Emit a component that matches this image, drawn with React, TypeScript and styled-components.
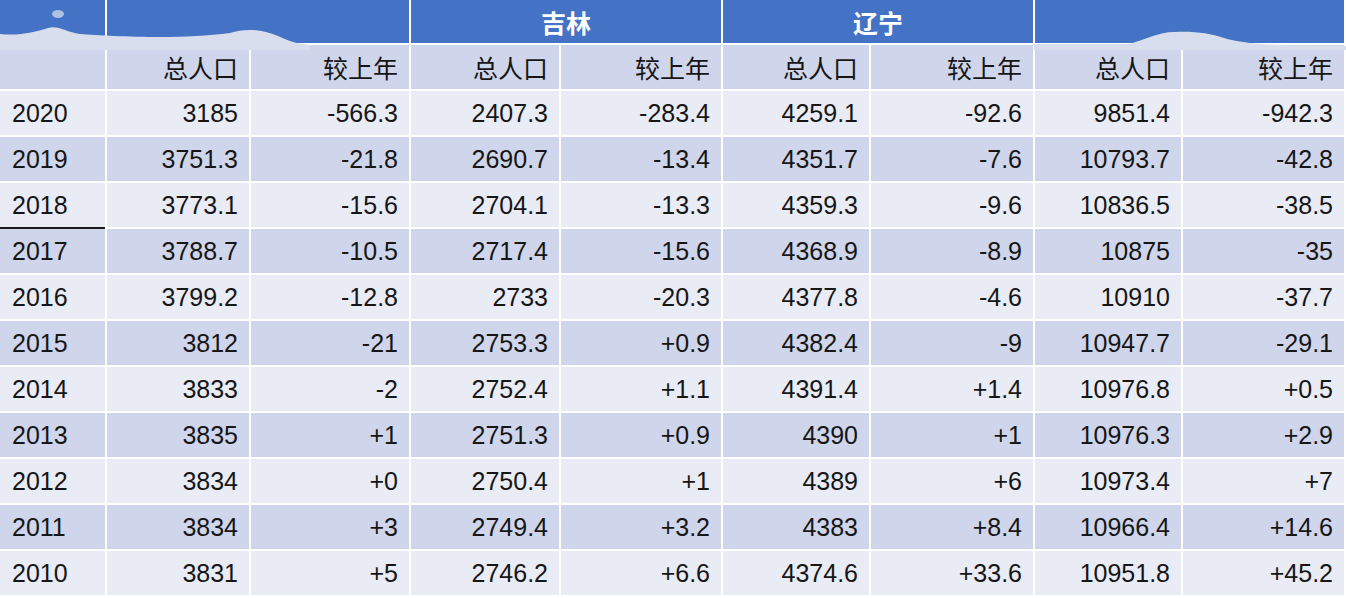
import styled, {createGlobalStyle, css} from "styled-components";

const GlobalStyle = createGlobalStyle`
  html, body {
    margin: 0;
    padding: 0;
    background: #ffffff;
  }
  body {
    font-family: "Liberation Sans", "Noto Sans CJK SC", sans-serif;
  }
`;

const COLS = "105px 142px 158px 148px 160px 146px 162px 146px 161px";

const StyledTable = styled.div`
  position: relative;
  display: grid;
  grid-template-columns: ${COLS};
  grid-template-rows: 43px 44px;
  grid-auto-rows: 44px;
  gap: 2px;
  width: 1346px;
  background: #ffffff;
  color: #161616;
  font-size: 25px;
`;

const StyledHeadCell = styled.div<{ $span?: number }>`
  grid-column: span ${props => props.$span || 1};
  background: #4472c4;
  color: #ffffff;
  font-weight: bold;
  display: flex;
  align-items: center;
  justify-content: center;
  font-size: 25px;
`;

const StyledCell = styled.div<{ $shade: boolean, $left?: boolean, $rule?: boolean }>`
  background: ${props => props.$shade ? "#cfd5ea" : "#e9ebf5"};
  display: flex;
  align-items: center;
  justify-content: ${props => props.$left ? "flex-start" : "flex-end"};
  padding: 0 ${props => props.$left ? "0 0 12px" : "11px 0 0"};
  padding-left: ${props => props.$left ? "12px" : "0"};
  padding-right: ${props => props.$left ? "0" : "11px"};
  ${props => props.$rule && css`
    box-shadow: 0 2px 0 0 #1a1a1a;`
  }
`;

const StyledSmudge = styled.svg`
  position: absolute;
  top: 0;
  pointer-events: none;
`;

const rows: [string, string, string, string, string, string, string, string, string][] = [
    ["2020", "3185", "-566.3", "2407.3", "-283.4", "4259.1", "-92.6", "9851.4", "-942.3"],
    ["2019", "3751.3", "-21.8", "2690.7", "-13.4", "4351.7", "-7.6", "10793.7", "-42.8"],
    ["2018", "3773.1", "-15.6", "2704.1", "-13.3", "4359.3", "-9.6", "10836.5", "-38.5"],
    ["2017", "3788.7", "-10.5", "2717.4", "-15.6", "4368.9", "-8.9", "10875", "-35"],
    ["2016", "3799.2", "-12.8", "2733", "-20.3", "4377.8", "-4.6", "10910", "-37.7"],
    ["2015", "3812", "-21", "2753.3", "+0.9", "4382.4", "-9", "10947.7", "-29.1"],
    ["2014", "3833", "-2", "2752.4", "+1.1", "4391.4", "+1.4", "10976.8", "+0.5"],
    ["2013", "3835", "+1", "2751.3", "+0.9", "4390", "+1", "10976.3", "+2.9"],
    ["2012", "3834", "+0", "2750.4", "+1", "4389", "+6", "10973.4", "+7"],
    ["2011", "3834", "+3", "2749.4", "+3.2", "4383", "+8.4", "10966.4", "+14.6"],
    ["2010", "3831", "+5", "2746.2", "+6.6", "4374.6", "+33.6", "10951.8", "+45.2"],
];

const subHeads = ["总人口", "较上年", "总人口", "较上年", "总人口", "较上年", "总人口", "较上年"];

export default function App() {
    return (
        <>
            <GlobalStyle/>
            <StyledTable>
                <StyledHeadCell/>
                <StyledHeadCell $span={2}/>
                <StyledHeadCell $span={2}>吉林</StyledHeadCell>
                <StyledHeadCell $span={2}>辽宁</StyledHeadCell>
                <StyledHeadCell $span={2}/>

                <StyledCell $shade={true} $left/>
                {subHeads.map((text, i) => (
                    <StyledCell key={"s" + i} $shade={true}>{text}</StyledCell>
                ))}

                {rows.map((row, r) => row.map((value, c) => (
                    <StyledCell key={r + "-" + c}
                                $shade={r % 2 === 1}
                                $left={c === 0}
                                $rule={c === 0 && row[0] === "2018"}>{value}</StyledCell>
                )))}

                {/* blurred patches over the masked header labels */}
                <StyledSmudge width="310" height="50" style={{left: 0}} viewBox="0 0 310 50">
                    <path d="M0 34 C20 36 35 32 48 28 C58 25 66 32 80 34 C110 36 180 40 230 33 C245 28 262 29 278 36 C290 42 300 44 310 45 L310 50 L0 50 Z"
                          fill="#d9deee"/>
                    <ellipse cx="58" cy="14" rx="6" ry="4" fill="#c9d5ee" opacity="0.8"/>
                </StyledSmudge>
                <StyledSmudge width="312" height="50" style={{left: 1034}} viewBox="0 0 312 50">
                    <path d="M0 44 L95 44 C110 40 125 32 140 32 C160 31 175 33 190 38 C210 44 240 46 312 46 L312 50 L0 50 Z"
                          fill="#d9deee"/>
                </StyledSmudge>
            </StyledTable>
        </>
    )
}
